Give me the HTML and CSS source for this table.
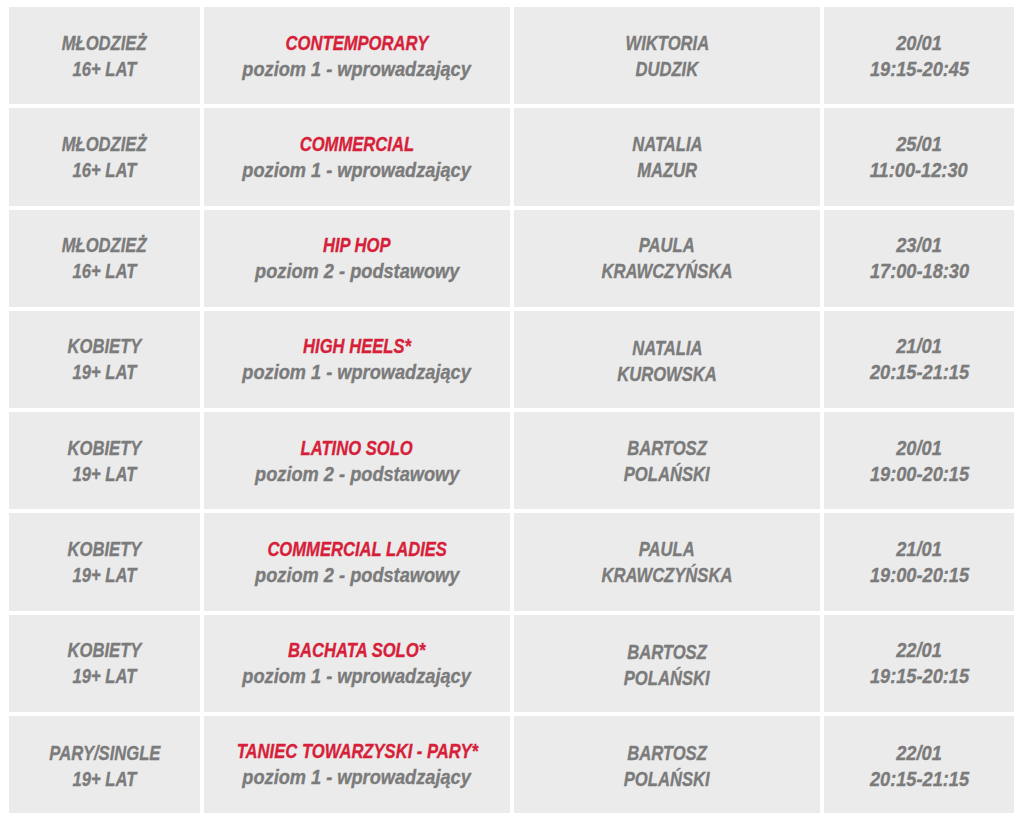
FILE: index.html
```html
<!DOCTYPE html>
<html lang="pl">
<head>
<meta charset="utf-8">
<title>Grafik zajęć</title>
<link rel="stylesheet" href="styles.css">
</head>
<body>
<div class="schedule">
  <div class="cell"><span>MŁODZIEŻ</span><span>16+ LAT</span></div>
  <div class="cell"><span class="title">CONTEMPORARY</span><span class="sub">poziom 1 - wprowadzający</span></div>
  <div class="cell"><span>WIKTORIA</span><span>DUDZIK</span></div>
  <div class="cell date"><span>20/01</span><span>19:15-20:45</span></div>

  <div class="cell"><span>MŁODZIEŻ</span><span>16+ LAT</span></div>
  <div class="cell"><span class="title">COMMERCIAL</span><span class="sub">poziom 1 - wprowadzający</span></div>
  <div class="cell"><span>NATALIA</span><span>MAZUR</span></div>
  <div class="cell date"><span>25/01</span><span>11:00-12:30</span></div>

  <div class="cell"><span>MŁODZIEŻ</span><span>16+ LAT</span></div>
  <div class="cell"><span class="title">HIP HOP</span><span class="sub">poziom 2 - podstawowy</span></div>
  <div class="cell"><span>PAULA</span><span>KRAWCZYŃSKA</span></div>
  <div class="cell date"><span>23/01</span><span>17:00-18:30</span></div>

  <div class="cell"><span>KOBIETY</span><span>19+ LAT</span></div>
  <div class="cell"><span class="title">HIGH HEELS*</span><span class="sub">poziom 1 - wprowadzający</span></div>
  <div class="cell shift"><span>NATALIA</span><span>KUROWSKA</span></div>
  <div class="cell date"><span>21/01</span><span>20:15-21:15</span></div>

  <div class="cell"><span>KOBIETY</span><span>19+ LAT</span></div>
  <div class="cell"><span class="title">LATINO SOLO</span><span class="sub">poziom 2 - podstawowy</span></div>
  <div class="cell"><span>BARTOSZ</span><span>POLAŃSKI</span></div>
  <div class="cell date"><span>20/01</span><span>19:00-20:15</span></div>

  <div class="cell"><span>KOBIETY</span><span>19+ LAT</span></div>
  <div class="cell"><span class="title">COMMERCIAL LADIES</span><span class="sub">poziom 2 - podstawowy</span></div>
  <div class="cell"><span>PAULA</span><span>KRAWCZYŃSKA</span></div>
  <div class="cell date"><span>21/01</span><span>19:00-20:15</span></div>

  <div class="cell"><span>KOBIETY</span><span>19+ LAT</span></div>
  <div class="cell"><span class="title">BACHATA SOLO*</span><span class="sub">poziom 1 - wprowadzający</span></div>
  <div class="cell shift"><span>BARTOSZ</span><span>POLAŃSKI</span></div>
  <div class="cell date"><span>22/01</span><span>19:15-20:15</span></div>

  <div class="cell low"><span>PARY/SINGLE</span><span>19+ LAT</span></div>
  <div class="cell"><span class="title">TANIEC TOWARZYSKI - PARY*</span><span class="sub">poziom 1 - wprowadzający</span></div>
  <div class="cell low"><span>BARTOSZ</span><span>POLAŃSKI</span></div>
  <div class="cell date low"><span>22/01</span><span>20:15-21:15</span></div>
</div>
</body>
</html>
```
FILE: styles.css
```css
html, body {
  margin: 0;
  padding: 0;
  background: #ffffff;
}
body {
  padding: 7px 10px 0 9px;
}
.schedule {
  display: grid;
  grid-template-columns: 191px 306px 306px 190px;
  grid-template-rows: repeat(8, 1fr);
  gap: 4px;
  height: 806px;
  width: 1005px;
}
.cell {
  background: #ebebeb;
  display: flex;
  flex-direction: column;
  align-items: center;
  justify-content: center;
  font-family: "Liberation Sans", Arial, sans-serif;
  font-weight: bold;
  font-style: italic;
  font-size: 20px;
  line-height: 26px;
  color: #7b7b7b;
  -webkit-text-stroke: 0.35px currentColor;
  text-align: center;
  white-space: nowrap;
}
.cell span {
  display: inline-block;
  transform: scaleX(0.83);
}
.cell .sub,
.cell.date span {
  transform: scaleX(0.91);
}
.cell.shift {
  padding-top: 3px;
}
.cell.low {
  padding-top: 4px;
}
.title {
  color: #d71f3a;
}
```
